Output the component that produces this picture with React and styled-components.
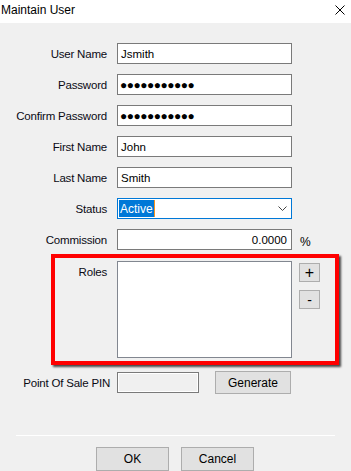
import React from "react";
import styled, { createGlobalStyle } from "styled-components";

const GlobalStyle = createGlobalStyle`
  html, body {
    margin: 0;
    padding: 0;
    background: #f0f0f0;
  }
  body {
    font-family: "Liberation Sans", Arial, sans-serif;
    font-size: 11px;
    color: #000;
  }
`;

const Window = styled.div`
  width: 351px;
  height: 471px;
  background: #f0f0f0;
  display: flex;
  flex-direction: column;
  overflow: hidden;
`;

const TitleBar = styled.div`
  height: 23px;
  background: #fff;
  display: flex;
  align-items: center;
  justify-content: space-between;
  padding: 0 6px 0 1px;
  flex-shrink: 0;
`;

const Title = styled.span`
  font-size: 12px;
  color: #000;
  margin-top: -3px;
`;

const CloseIcon = styled.svg`
  width: 10px;
  height: 10px;
  margin-top: -4px;
`;

const Form = styled.div`
  display: grid;
  grid-template-columns: 107px 175px 48px;
  column-gap: 10px;
  row-gap: 10px;
  padding: 20px 0 0 0;
  align-items: center;
`;

const Label = styled.label`
  text-align: right;
  white-space: nowrap;
  color: #0a0a14;
  font-size: 11.5px;
  letter-spacing: -0.2px;
  align-self: ${(p) => (p.top ? "start" : "center")};
  padding-top: ${(p) => (p.top ? "5px" : "0")};
`;

const TextBox = styled.div`
  height: 21px;
  box-sizing: border-box;
  border: 1px solid #7a7a7a;
  background: #fff;
  display: flex;
  align-items: center;
  justify-content: ${(p) => (p.right ? "flex-end" : "flex-start")};
  padding: 0 4px 0 3px;
  font-size: 11.5px;
`;

const Dots = styled.span`
  font-size: 12px;
  letter-spacing: -0.5px;
  margin-left: -1px;
`;

const Select = styled(TextBox)`
  border-color: #0078d7;
  justify-content: space-between;
  padding: 1px 4px 1px 1px;
  align-items: stretch;
`;

const Highlight = styled.span`
  background: #0078d7;
  color: #fff;
  display: flex;
  align-items: center;
  padding: 0 1px;
  border-right: 1px solid #f7931e;
  font-size: 12px;
`;

const Chevron = styled.svg`
  width: 9px;
  align-self: center;
`;

const Unit = styled.span`
  font-size: 12px;
  margin-left: -2px;
  padding-top: 4px;
`;

const RolesCell = styled.div`
  position: relative;
  grid-column: 1 / 4;
  display: grid;
  grid-template-columns: 107px 175px 48px;
  column-gap: 10px;
  margin-top: 1px;
`;

const ListBox = styled.div`
  height: 97px;
  box-sizing: border-box;
  border: 1px solid #828790;
  background: #fff;
`;

const SideButtons = styled.div`
  display: flex;
  flex-direction: column;
  gap: 8px;
  padding-top: 2px;
  margin-left: -3px;
`;

const Button = styled.button`
  box-sizing: border-box;
  width: ${(p) => p.w}px;
  height: ${(p) => p.h}px;
  background: #e1e1e1;
  border: 1px solid #adadad;
  font-family: "Liberation Sans", Arial, sans-serif;
  font-size: ${(p) => p.fs || 12}px;
  color: #000;
  padding: 0;
  display: flex;
  align-items: center;
  justify-content: center;
`;

const Annotation = styled.div`
  position: absolute;
  left: 51px;
  top: -7px;
  width: 288px;
  height: 111px;
  box-sizing: border-box;
  border: 4px solid #ff0000;
  box-shadow: 2px 2px 2px rgba(0, 0, 0, 0.7);
  pointer-events: none;
`;

const PinRow = styled.div`
  grid-column: 1 / 4;
  display: grid;
  grid-template-columns: 110px 82px 76px;
  column-gap: 7px;
  align-items: center;
  margin-top: 3px;
`;

const PinBox = styled.div`
  height: 21px;
  box-sizing: border-box;
  border: 1px solid #7a7a7a;
  box-shadow: inset 0 0 0 1px #fff;
  background: #f0f0f0;
`;

const GenerateSlot = styled.div`
  margin-left: 9px;
`;

const Separator = styled.div`
  margin: 41px 16px 0 16px;
  height: 1px;
  background: #a0a0a0;
  border-bottom: 1px solid #fff;
`;

const Footer = styled.div`
  display: flex;
  gap: 12px;
  padding-left: 96px;
  margin-top: 11px;
`;

const fields = [
  { label: "User Name", value: "Jsmith" },
  { label: "Password", password: true },
  { label: "Confirm Password", password: true },
  { label: "First Name", value: "John" },
  { label: "Last Name", value: "Smith" },
];

export default function App() {
  return (
    <Window>
      <GlobalStyle />
      <TitleBar>
        <Title>Maintain User</Title>
        <CloseIcon viewBox="0 0 10 10">
          <path d="M0.5 0.5 L9.5 9.5 M9.5 0.5 L0.5 9.5" stroke="#000" strokeWidth="1" fill="none" />
        </CloseIcon>
      </TitleBar>
      <Form>
        {fields.map((f) => (
          <React.Fragment key={f.label}>
            <Label>{f.label}</Label>
            <TextBox>{f.password ? <Dots>●●●●●●●●●●●</Dots> : f.value}</TextBox>
            <span />
          </React.Fragment>
        ))}
        <Label>Status</Label>
        <Select>
          <Highlight>Active</Highlight>
          <Chevron viewBox="0 0 9 5" height="5">
            <path d="M0.5 0.5 L4.5 4.5 L8.5 0.5" stroke="#444" strokeWidth="1" fill="none" />
          </Chevron>
        </Select>
        <span />
        <Label>Commission</Label>
        <TextBox right>0.0000</TextBox>
        <Unit>%</Unit>
        <RolesCell>
          <Label top>Roles</Label>
          <ListBox />
          <SideButtons>
            <Button w={21} h={19} fs={16}>+</Button>
            <Button w={21} h={19} fs={14}>-</Button>
          </SideButtons>
          <Annotation />
        </RolesCell>
        <PinRow>
          <Label>Point Of Sale PIN</Label>
          <PinBox />
          <GenerateSlot>
            <Button w={76} h={23}>Generate</Button>
          </GenerateSlot>
        </PinRow>
      </Form>
      <Separator />
      <Footer>
        <Button w={73} h={24}>OK</Button>
        <Button w={73} h={24}>Cancel</Button>
      </Footer>
    </Window>
  );
}
